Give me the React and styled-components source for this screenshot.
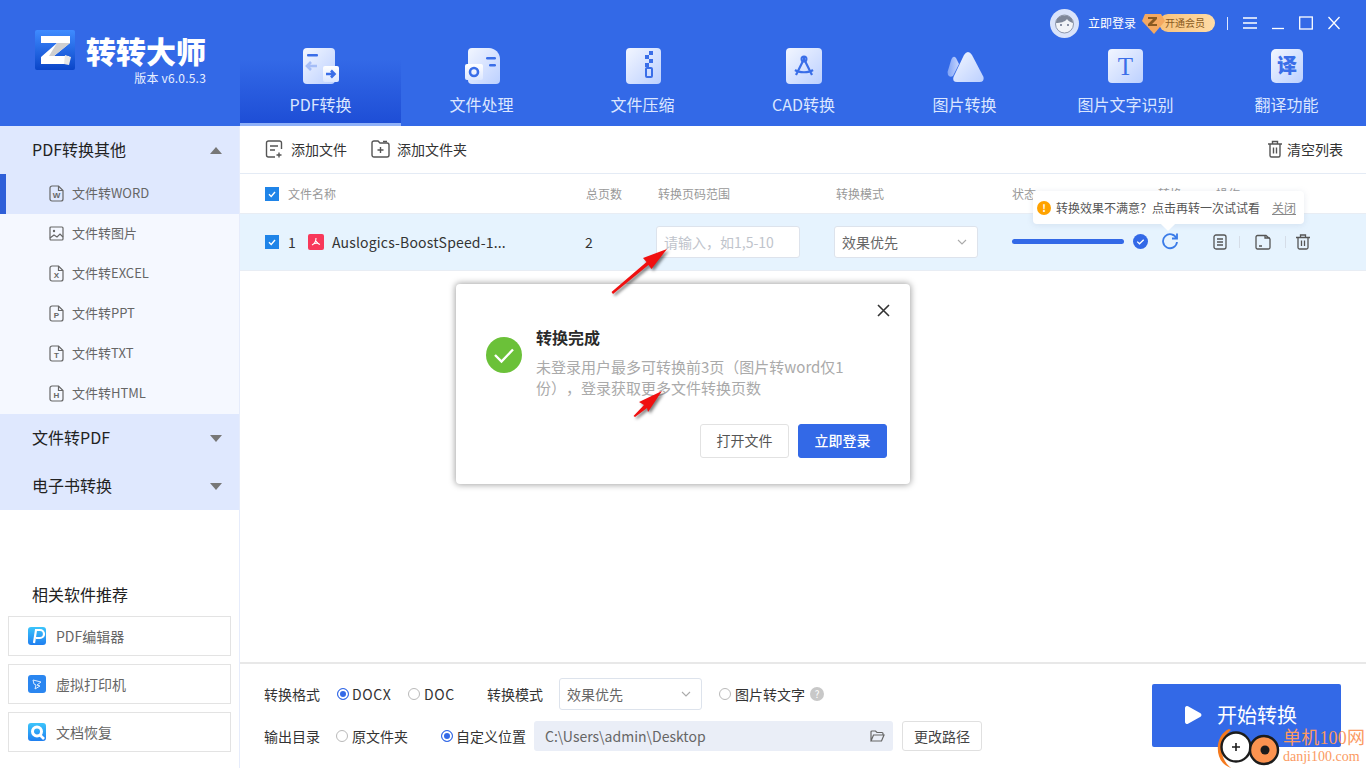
import React from "react";
import styled, { createGlobalStyle } from "styled-components";

const Global = createGlobalStyle`
  html, body { margin: 0; padding: 0; background: #fff; }
  * { box-sizing: border-box; }
  body { font-family: "Noto Sans CJK SC", "Noto Sans", sans-serif; overflow: hidden; text-spacing-trim: space-all; }
`;

const Page = styled.div`
  position: relative; width: 1366px; height: 768px; overflow: hidden;
  display: flex; flex-direction: column; color: #333; line-height: 20px;
`;
const Header = styled.header`display: flex; height: 126px; background: #3369e7; flex: none;`;
const Brand = styled.div`
  width: 240px; flex: none; display: grid; grid-template-columns: 40px auto; column-gap: 11px;
  padding: 30px 0 0 35px; align-content: start; color: #fff;
`;
const BrandText = styled.div`display: flex; flex-direction: column; align-items: flex-end; width: 120px; margin-top: 4px;`;
const BrandName = styled.div`font-size: 30px; line-height: 32px; font-weight: 900; letter-spacing: 0; white-space: nowrap;`;
const Version = styled.div`font-size: 12px; line-height: 16px; margin-top: 4px; color: #e8efff; white-space: nowrap; letter-spacing: .2px;`;
const HeaderRight = styled.div`flex: 1; display: flex; flex-direction: column; min-width: 0;`;
const TopBar = styled.div`height: 48px; display: flex; align-items: flex-start; justify-content: flex-end; padding: 9px 25px 0 0;`;
const Avatar = styled.div`width: 29px; height: 29px; flex: none;`;
const LoginLink = styled.span`font-size: 12px; color: #fff; margin-left: 9px; line-height: 28px; width: 53px; white-space: nowrap;`;
const Vip = styled.div`position: relative; margin-top: 5px; width: 74px; height: 18px;`;
const VipPill = styled.div`
  position: absolute; left: 18px; top: 0; width: 56px; height: 18px; border-radius: 9px;
  background: linear-gradient(90deg, #f9c27c, #ffdca6); color: #8a5a22; font-size: 10px; line-height: 18px;
  padding-left: 6px; white-space: nowrap;
`;
const VipMark = styled.svg`position: absolute; left: 0; top: -2px; width: 24px; height: 22px;`;
const Divider = styled.div`width: 1px; height: 13px; background: #dfe8ff; margin: 8px 15px 0 12px;`;
const WinBtn = styled.svg`width: 14px; height: 14px; margin: 7px ${p => p.$gap}px 0 0; flex: none; stroke: #fff; fill: none; stroke-width: 1.3;`;
const Tabs = styled.nav`display: grid; grid-template-columns: repeat(7, 161px); height: 78px;`;
const Tab = styled.div`
  display: flex; flex-direction: column; align-items: center; height: 78px; position: relative;
  background: ${p => p.$active ? "linear-gradient(180deg, #3369e7 15%, #1e4ed6 100%)" : "transparent"};
  border-bottom: 3px solid ${p => p.$active ? "#8fb1f8" : "transparent"};
`;
const TabIcon = styled.svg`width: 40px; height: 38px; flex: none;`;
const TabLabel = styled.span`font-size: 16px; line-height: 22px; margin-top: 7px; color: #dbe6ff; white-space: nowrap;`;

const Body = styled.div`flex: 1; display: flex; min-height: 0;`;
const Side = styled.aside`width: 240px; flex: none; display: flex; flex-direction: column; border-right: 1px solid #e6ecfb; background: #fff;`;
const GroupHead = styled.div`
  height: 48px; display: flex; align-items: center; justify-content: space-between; padding: 0 17px 2px 32px;
  background: #dfe8fe; font-size: 16px; color: #222;
`;
const Caret = styled.span`
  width: 0; height: 0; border-left: 6px solid transparent; border-right: 6px solid transparent; margin-top: 2px;
  ${p => p.$up ? "border-bottom: 7px solid #777;" : "border-top: 7px solid #777;"}
`;
const SubList = styled.div`background: #f5f8ff; display: flex; flex-direction: column;`;
const SubItem = styled.div`
  height: 40px; display: flex; align-items: center; gap: 8px; font-size: 13px; color: #666; position: relative; padding-bottom: 1px;
  background: ${p => p.$active ? "#dfe8fe" : "transparent"};
  border-left: ${p => p.$active ? "6px solid #2f5fd8" : "0"};
  padding-left: ${p => p.$active ? "43px" : "49px"};
`;
const SubLabel = styled.span`margin-top: -2px; white-space: nowrap;`;
const SubIcon = styled.svg`width: 15px; height: 17px; flex: none; fill: none; stroke: #666; stroke-width: 1.2;`;
const RecBlock = styled.div`margin-top: auto; padding: 0 8px 16px 8px; display: flex; flex-direction: column;`;
const RecTitle = styled.div`font-size: 16px; line-height: 22px; color: #222; padding-left: 24px; margin-bottom: 11px; margin-top: -1px;`;
const RecBtn = styled.div`
  width: 223px; height: 40px; border: 1px solid #e3e3e3; display: flex; align-items: center; gap: 10px; padding-left: 19px; 
  font-size: 14px; color: #666; margin-bottom: 8px; &:last-child { margin-bottom: 0; }
`;
const RecIcon = styled.svg`width: 18px; height: 18px; flex: none;`;

const Main = styled.main`flex: 1; display: flex; flex-direction: column; min-width: 0;`;
const Toolbar = styled.div`height: 48px; flex: none; display: flex; align-items: center; padding: 0 23px 2px 25px; border-bottom: 1px solid #e4ebf5; gap: 24px; font-size: 14px; color: #333;`;
const ToolBtn = styled.div`display: flex; align-items: center; gap: ${p => p.$gap || 8}px; white-space: nowrap; ${p => p.$right && "margin-left: auto;"}`;
const ToolIcon = styled.svg`width: ${p => p.$w || 18}px; height: 18px; fill: none; stroke: #555; stroke-width: 1.4; flex: none;`;
const TableGrid = `display: grid; grid-template-columns: 321px 72px 178px 176px 146px 58px 1fr; padding-left: 25px; align-items: center;`;
const HeadRow = styled.div`${TableGrid} height: 40px; flex: none; font-size: 12px; color: #999; border-bottom: 1px solid #e8edf4;`;
const Row = styled.div`${TableGrid} height: 57px; flex: none; background: #e6f3fe; border-bottom: 1px solid #e8edf4; font-size: 14px; color: #333;`;
const NameCell = styled.div`display: flex; align-items: center; min-width: 0;`;
const Check = styled.span`
  width: 14px; height: 14px; background: #1f84e8; flex: none; margin-right: ${p => p.$gap}px;
  display: flex; align-items: center; justify-content: center; svg { width: 10px; height: 10px; }
`;
const RowNo = styled.span`width: 20px; flex: none;`;
const FileName = styled.span`margin-left: 8px; white-space: nowrap; width: 180px; color: #333; letter-spacing: .17px;`;
const PageCount = styled.span`margin-left: -1px;`;
const RangeInput = styled.div`
  width: 144px; height: 32px; margin-left: -2px; background: #fff; border: 1px solid #dde3ec; border-radius: 3px;
  display: flex; align-items: center; padding-left: 7px; font-size: 14px; color: #c0c4cc; white-space: nowrap;
`;
const Select = styled.div`
  width: ${p => p.$w}px; height: ${p => p.$h}px; margin-left: ${p => p.$ml || 0}px; background: #fff; border: 1px solid #dde3ec; border-radius: 3px;
  display: flex; align-items: center; justify-content: space-between; padding: 0 10px 0 7px; font-size: 14px; color: #666; flex: none;
  svg { width: 10px; height: 6px; stroke: #aaa; fill: none; stroke-width: 1.1; }
`;
const StatusCell = styled.div`display: flex; align-items: center; gap: 9px; margin-top: -2px;`;
const Progress = styled.div`width: 112px; height: 5px; border-radius: 3px; background: #3369e7;`;
const DoneDot = styled.svg`width: 15px; height: 15px; flex: none;`;
const RetryCell = styled.div`display: flex; margin-left: 3px; margin-top: -2px;`;
const OpsCell = styled.div`display: flex; align-items: center; margin-left: -4px;`;
const OpIcon = styled.svg`width: 16px; height: 16px; fill: none; stroke: #555; stroke-width: 1.3; flex: none;`;
const OpSep = styled.span`width: 1px; height: 12px; background: #d5dde8; margin: 0 ${p => p.$r}px 0 ${p => p.$l}px;`;
const ListSpace = styled.div`flex: 1;`;
const Footer = styled.footer`height: 106px; flex: none; border-top: 2px solid #e8e8e8; display: flex; padding: 14px 25px 0 24px; font-size: 14px; color: #333;`;
const FootLeft = styled.div`display: flex; flex-direction: column; gap: 11px;`;
const FootRow = styled.div`display: flex; align-items: center; height: ${p => p.$h}px;`;
const FootLabel = styled.span`width: 56px; flex: none; margin-right: ${p => p.$mr}px; white-space: nowrap;`;
const Option = styled.label`display: flex; align-items: center; gap: ${p => p.$gap ?? 4}px; width: ${p => p.$w ? p.$w + "px" : "auto"}; flex: none; white-space: nowrap; margin-left: ${p => p.$ml || 0}px;`;
const LatinOpt = styled.span`letter-spacing: .6px;`;
const Radio = styled.span`
  width: 12px; height: 12px; border-radius: 50%; flex: none; background: #fff;
  border: 1px solid ${p => p.$on ? "#3369e7" : "#b9b9b9"};
  ${p => p.$on && "box-shadow: inset 0 0 0 2px #fff; background: #3369e7;"}
`;
const Help = styled.span`
  width: 14px; height: 14px; border-radius: 50%; background: #c8c8c8; color: #fff; font-size: 10px; line-height: 14px;
  text-align: center; margin-left: 5px; flex: none;
`;
const PathBox = styled.div`
  width: 359px; height: 30px; background: #eaeef7; border-radius: 3px; display: flex; align-items: center; justify-content: space-between;
  padding: 0 8px 0 11px; color: #666; margin-left: 8px; flex: none;
  svg { width: 15px; height: 14px; stroke: #666; fill: none; stroke-width: 1.2; }
`;
const PathBtn = styled.div`
  width: 80px; height: 30px; border: 1px solid #e0e0e0; border-radius: 3px; margin-left: 9px; display: flex; align-items: center; justify-content: center; color: #444; flex: none;
`;
const StartBtn = styled.div`
  margin: 6px 0 0 auto; width: 189px; height: 63px; background: #3369e7; border-radius: 2px; color: #fff; font-size: 20px;
  display: flex; align-items: center; gap: 15px; flex: none; padding: 0 0 2px 32px;
  svg { width: 18px; height: 20px; fill: #fff; }
`;

const Tooltip = styled.div`
  position: absolute; left: 1033px; top: 191px; width: 271px; height: 33px; background: #fff; border-radius: 4px;
  box-shadow: 0 1px 6px rgba(120,140,170,.18); display: flex; align-items: center; padding: 0 8px 0 4px; font-size: 12px; color: #555; white-space: nowrap;
  &::after { content: ""; position: absolute; left: 130px; bottom: -5px; width: 10px; height: 10px; background: #fff; transform: rotate(45deg); }
`;
const WarnDot = styled.span`
  width: 14px; height: 14px; border-radius: 50%; background: #ffa200; color: #fff; font-size: 10px; font-weight: 700; line-height: 14px; text-align: center; margin-right: 5px; flex: none;
`;
const TipClose = styled.span`margin-left: auto; text-decoration: underline; color: #888;`;

const Dialog = styled.div`
  position: absolute; left: 456px; top: 284px; width: 454px; height: 200px; background: #fff; border-radius: 4px;
  box-shadow: 0 0 6px 1px rgba(0,0,0,.35); padding: 43px 23px 26px 30px; display: flex; flex-direction: column;
`;
const CloseX = styled.svg`position: absolute; right: 20px; top: 20px; width: 13px; height: 13px; stroke: #333; stroke-width: 1.6; fill: none;`;
const DlgBody = styled.div`display: flex; gap: 14px;`;
const DlgOk = styled.svg`width: 36px; height: 36px; flex: none; margin-top: 10px;`;
const DlgText = styled.div`width: 318px; margin-top: -1px;`;
const DlgTitle = styled.div`font-size: 16px; font-weight: 700; line-height: 22px; color: #2b2b2b;`;
const DlgMsg = styled.div`font-size: 15px; line-height: 21px; color: #aaa; margin-top: 8px;`;
const DlgActions = styled.div`margin-top: auto; display: flex; justify-content: flex-end; gap: 9px;`;
const DlgBtn = styled.div`
  width: 89px; height: 34px; border-radius: 3px; display: flex; align-items: center; justify-content: center; font-size: 14px; padding-bottom: 2px;
  background: ${p => p.$primary ? "#3369e7" : "#fff"}; color: ${p => p.$primary ? "#fff" : "#555"};
  border: 1px solid ${p => p.$primary ? "#3369e7" : "#e2e2e2"}; font-weight: ${p => p.$primary ? 500 : 400};
`;
const Arrow = styled.svg`
  position: absolute; left: ${p => p.$x}px; top: ${p => p.$y}px; width: ${p => p.$w}px; height: ${p => p.$h}px; overflow: visible;
  filter: drop-shadow(2px 2px 1.5px rgba(0,0,0,.5));
`;
const Watermark = styled.div`position: absolute; left: 1215px; top: 725px; width: 151px; height: 43px;`;
const WmIcon = styled.svg`position: absolute; left: 0; top: 0; width: 72px; height: 43px;`;
const WmTitle = styled.div`position: absolute; left: 68px; top: 3px; font-family: "Liberation Serif", "Noto Sans CJK SC", serif; font-size: 18px; line-height: 20px; color: #fb9a62; white-space: nowrap; letter-spacing: .2px;`;
const WmUrl = styled.div`position: absolute; left: 68px; top: 24px; font-family: "Liberation Serif", serif; font-size: 14px; line-height: 16px; color: #fb9a62; white-space: nowrap;`;

const Defs = () => (
  <svg width="0" height="0" style={{ position: "absolute" }}>
    <defs>
      <linearGradient id="tabG" x1="0" y1="0" x2="1" y2="1">
        <stop offset="0" stopColor="#f2f6ff" />
        <stop offset="1" stopColor="#bcd0ff" />
      </linearGradient>
      <linearGradient id="tabG2" x1="0" y1="0" x2="0" y2="1">
        <stop offset="0" stopColor="#ffffff" />
        <stop offset="1" stopColor="#dbe6ff" />
      </linearGradient>
      <linearGradient id="tabG3" x1="0" y1="0" x2="1" y2="0">
        <stop offset="0" stopColor="#7fa2f5" />
        <stop offset="1" stopColor="#c6d6ff" />
      </linearGradient>
      <linearGradient id="logoG" x1="0" y1="0" x2="0" y2="1">
        <stop offset="0" stopColor="#3f8bff" />
        <stop offset="1" stopColor="#0a45c8" />
      </linearGradient>
      <linearGradient id="recG" x1="0" y1="0" x2="0" y2="1">
        <stop offset="0" stopColor="#3cc5fb" />
        <stop offset="1" stopColor="#1f7ff0" />
      </linearGradient>
    </defs>
  </svg>
);

const tabIcons = [
  <g key="a">
    <rect x="2" y="0" width="32" height="36" rx="4" fill="url(#tabG)" />
    <rect x="6" y="6" width="11" height="2.5" rx="1" fill="#3a6ee8" />
    <path d="M6 18h10M10 14l-4 4 4 4" stroke="#a5bdf7" strokeWidth="2.6" fill="none" />
    <rect x="22" y="18" width="16" height="16" rx="2" fill="url(#tabG2)" />
    <path d="M25 26h8M30 22.5l3.5 3.5-3.5 3.5" stroke="#3a6ee8" strokeWidth="2.6" fill="none" />
  </g>,
  <g key="b">
    <path d="M6 4a4 4 0 0 1 4-4h17c6 0 11 5 11 11v21a4 4 0 0 1-4 4H10a4 4 0 0 1-4-4z" fill="url(#tabG)" />
    <rect x="24" y="9" width="10" height="2.5" rx="1.2" fill="#3a6ee8" />
    <rect x="27" y="16" width="7" height="2.5" rx="1.2" fill="#3a6ee8" />
    <rect x="3" y="16" width="18" height="16" rx="2" fill="url(#tabG2)" />
    <circle cx="12" cy="24" r="4" fill="none" stroke="#3a6ee8" strokeWidth="2.6" />
  </g>,
  <g key="c">
    <rect x="3" y="0" width="35" height="36" rx="4" fill="url(#tabG)" />
    <path d="M26 3h4v4h-4zM22 7h4v4h-4zM26 11h4v4h-4zM22 15h4v4h-4z" fill="#3a6ee8" />
    <rect x="23" y="20" width="6" height="9" rx="1" fill="none" stroke="#3a6ee8" strokeWidth="2" />
  </g>,
  <g key="d">
    <rect x="2" y="0" width="36" height="36" rx="4" fill="url(#tabG)" />
    <path d="M20 8v3M20 11l-8 16M20 11l8 16M11 22c4 3 14 3 18 0" stroke="#3a6ee8" strokeWidth="2.2" fill="none" />
    <circle cx="20" cy="11" r="2.5" fill="none" stroke="#3a6ee8" strokeWidth="2" />
  </g>,
  <g key="e">
    <path d="M2.5 24L6.5 11q2-4 4.5-1L14 16 8 28q-3 2-5-1z" fill="url(#tabG3)" />
    <path d="M8.5 29L19 7q4-6 8 0L38.5 29q1 5-4 5H12q-5 0-3.5-5z" fill="url(#tabG)" />
  </g>,
  <g key="f">
    <rect x="2" y="1" width="35" height="34" rx="4" fill="url(#tabG)" />
    <text x="19.5" y="26.5" textAnchor="middle" fontFamily="Liberation Serif, serif" fontSize="25" fontWeight="400" fill="#3a6ee8">T</text>
  </g>,
  <g key="g">
    <rect x="4" y="1" width="32" height="34" rx="5" fill="url(#tabG)" />
    <text x="20" y="25" textAnchor="middle" fontFamily="Noto Sans CJK SC, sans-serif" fontSize="20" fontWeight="900" fill="#3a6ee8">译</text>
  </g>,
];
const tabNames = ["PDF转换", "文件处理", "文件压缩", "CAD转换", "图片转换", "图片文字识别", "翻译功能"];

const FileGlyph = ({ ch }) => (
  <SubIcon viewBox="0 0 15 17">
    <path d="M3 1h6.5L14 5.5V14a2 2 0 0 1-2 2H3a2 2 0 0 1-2-2V3a2 2 0 0 1 2-2z" />
    <path d="M9.5 1v4.5H14" />
    <text x="7.5" y="13" textAnchor="middle" fontFamily="Liberation Sans, sans-serif" fontSize="8" fontWeight="700" fill="#666" stroke="none">{ch}</text>
  </SubIcon>
);
const ImgGlyph = () => (
  <SubIcon viewBox="0 0 15 17">
    <rect x="1" y="2" width="13" height="13" rx="1" />
    <circle cx="5" cy="6" r="1.2" fill="#666" stroke="none" />
    <path d="M1 13l4-3 3 2 3-3 3 3" />
  </SubIcon>
);
const subs = [
  ["文件转WORD", "W"], ["文件转图片", null], ["文件转EXCEL", "X"], ["文件转PPT", "P"], ["文件转TXT", "T"], ["文件转HTML", "H"],
];
const Tick = () => (
  <svg viewBox="0 0 10 10"><path d="M2 5.2l2.2 2.2L8 3" stroke="#fff" strokeWidth="1.4" fill="none" /></svg>
);
const RedArrow = ({ x, y, w, h, d }) => (
  <Arrow $x={x} $y={y} $w={w} $h={h} viewBox={`0 0 ${w} ${h}`}>
    <path d={d} fill="#f01010" />
  </Arrow>
);

export default function App() {
  return (
    <Page>
      <Global />
      <Defs />
      <Header>
        <Brand>
          <svg width="40" height="40" viewBox="0 0 40 40">
            <rect width="40" height="40" rx="2" fill="url(#logoG)" />
            <path d="M6 6h29v7L19 26h15v8H6v-7l16-14H6z" fill="#fff" />
            <path d="M22 13h13L19 26h-5z" fill="#cfcfcf" />
            <path d="M30 25l6 2-2 8-5-1z" fill="#e6e6e6" />
          </svg>
          <BrandText>
            <BrandName>转转大师</BrandName>
            <Version>版本 v6.0.5.3</Version>
          </BrandText>
        </Brand>
        <HeaderRight>
          <TopBar>
            <Avatar>
              <svg width="29" height="29" viewBox="0 0 29 29">
                <circle cx="14.5" cy="14.5" r="14.5" fill="#d9e3fa" />
                <circle cx="14.5" cy="15" r="9" fill="#f2f4f8" stroke="#8d97ab" />
                <path d="M6 14c0-10 17-10 17 0-4-1-5-3-6-4-2 3-7 4-11 4z" fill="#7e8799" />
                <circle cx="11" cy="16" r="1" fill="#66708a" />
                <circle cx="18" cy="16" r="1" fill="#66708a" />
              </svg>
            </Avatar>
            <LoginLink>立即登录</LoginLink>
            <Vip>
              <VipPill>开通会员</VipPill>
              <VipMark viewBox="0 0 24 22">
                <path d="M4 2h16l4 7-11 13L1 9z" fill="#f4a860" />
                <path d="M7 5h9v2l-5 5h5v2H7v-2l5-5H7z" fill="#8a5a22" />
              </VipMark>
            </Vip>
            <Divider />
            <WinBtn $gap={14} viewBox="0 0 14 14"><path d="M0 2h14M0 7h14M0 12h14" /></WinBtn>
            <WinBtn $gap={14} viewBox="0 0 14 14"><path d="M1 12.5h12" /></WinBtn>
            <WinBtn $gap={14} viewBox="0 0 14 14"><rect x=".7" y="1" width="12.6" height="12" /></WinBtn>
            <WinBtn $gap={0} viewBox="0 0 14 14"><path d="M1.5 1l11 12M12.5 1l-11 12" /></WinBtn>
          </TopBar>
          <Tabs>
            {tabNames.map((n, i) => (
              <Tab key={n} $active={i === 0}>
                <TabIcon viewBox="0 0 40 38">{tabIcons[i]}</TabIcon>
                <TabLabel>{n}</TabLabel>
              </Tab>
            ))}
          </Tabs>
        </HeaderRight>
      </Header>
      <Body>
        <Side>
          <GroupHead>PDF转换其他<Caret $up /></GroupHead>
          <SubList>
            {subs.map(([t, c], i) => (
              <SubItem key={t} $active={i === 0}>
                {c ? <FileGlyph ch={c} /> : <ImgGlyph />}
                <SubLabel>{t}</SubLabel>
              </SubItem>
            ))}
          </SubList>
          <GroupHead>文件转PDF<Caret /></GroupHead>
          <GroupHead>电子书转换<Caret /></GroupHead>
          <RecBlock>
            <RecTitle>相关软件推荐</RecTitle>
            <RecBtn>
              <RecIcon viewBox="0 0 18 18">
                <rect width="18" height="18" rx="3" fill="url(#recG)" />
                <path d="M6 16L8 3h4a3.5 3.5 0 0 1 0 8H8" stroke="#fff" strokeWidth="2.2" fill="none" />
              </RecIcon>
              PDF编辑器
            </RecBtn>
            <RecBtn>
              <RecIcon viewBox="0 0 18 18">
                <rect width="18" height="18" rx="3" fill="#2a86f0" />
                <path d="M5 5l8 2-4 3 3 1-5 3 1-4-2-1z" stroke="#dcecff" strokeWidth="1" fill="none" />
              </RecIcon>
              虚拟打印机
            </RecBtn>
            <RecBtn>
              <RecIcon viewBox="0 0 18 18">
                <rect width="18" height="18" rx="3" fill="url(#recG)" />
                <circle cx="9" cy="8.5" r="4.5" stroke="#fff" strokeWidth="3" fill="none" />
                <path d="M12 12l4 4" stroke="#fff" strokeWidth="2.6" />
              </RecIcon>
              文档恢复
            </RecBtn>
          </RecBlock>
        </Side>
        <Main>
          <Toolbar>
            <ToolBtn $gap={8}>
              <ToolIcon viewBox="0 0 18 18">
                <path d="M16.5 9V3a2 2 0 0 0-2-2h-11a2 2 0 0 0-2 2v12a2 2 0 0 0 2 2H10" />
                <path d="M5 6h8M5 10h5M14 12.5v5M11.5 15h5" />
              </ToolIcon>
              添加文件
            </ToolBtn>
            <ToolBtn $gap={7}>
              <ToolIcon $w={19} viewBox="0 0 19 18">
                <path d="M1 3a2 2 0 0 1 2-2h4l2 2h7a2 2 0 0 1 2 2v10a2 2 0 0 1-2 2H3a2 2 0 0 1-2-2z" />
                <path d="M9.5 7v6M6.5 10h6M12 1.5h4" />
              </ToolIcon>
              添加文件夹
            </ToolBtn>
            <ToolBtn $right $gap={5}>
              <ToolIcon $w={14} viewBox="0 0 14 18">
                <path d="M0 4h14M4.5 4V1.5h5V4M2 4v11.5a1.5 1.5 0 0 0 1.5 1.5h7a1.5 1.5 0 0 0 1.5-1.5V4M5.5 7.5v6M8.5 7.5v6" />
              </ToolIcon>
              清空列表
            </ToolBtn>
          </Toolbar>
          <HeadRow>
            <NameCell><Check $gap={9}><Tick /></Check>文件名称</NameCell>
            <span>总页数</span>
            <span>转换页码范围</span>
            <span>转换模式</span>
            <span>状态</span>
            <span>转换</span>
            <span>操作</span>
          </HeadRow>
          <Row>
            <NameCell>
              <Check $gap={9}><Tick /></Check>
              <RowNo>1</RowNo>
              <svg width="16" height="16" viewBox="0 0 16 16" style={{ flex: "none" }}>
                <rect width="16" height="16" rx="2" fill="#f8385a" />
                <path d="M8 4c0 3-2 6-4 7M8 7c1 2 2 3 4 3.5M5 10c2-1 4-1 6-.5" stroke="#fff" strokeWidth="1.1" fill="none" />
              </svg>
              <FileName>Auslogics-BoostSpeed-1...</FileName>
            </NameCell>
            <PageCount>2</PageCount>
            <RangeInput>请输入，如1,5-10</RangeInput>
            <Select $w={144} $h={32} $ml={-2}>
              效果优先
              <svg viewBox="0 0 10 6"><path d="M1 1l4 4 4-4" /></svg>
            </Select>
            <StatusCell>
              <Progress />
              <DoneDot viewBox="0 0 15 15">
                <circle cx="7.5" cy="7.5" r="7.5" fill="#3369e7" />
                <path d="M4.2 7.6l2.3 2.2 4.2-4" stroke="#fff" strokeWidth="1.3" fill="none" />
              </DoneDot>
            </StatusCell>
            <RetryCell>
              <svg width="18" height="18" viewBox="0 0 18 18" fill="none" stroke="#3a7be8" strokeWidth="1.8">
                <path d="M15.5 6.5A7 7 0 1 0 16 10" />
                <path d="M16 1.5v5h-5" />
              </svg>
            </RetryCell>
            <OpsCell>
              <OpIcon viewBox="0 0 16 16"><rect x="2" y="1" width="12" height="14" rx="2" /><path d="M5 5h6M5 8h6M5 11h6" /></OpIcon>
              <OpSep $l={11} $r={15} />
              <OpIcon viewBox="0 0 16 16"><path d="M1 3a1.5 1.5 0 0 1 1.5-1.5H11L15 5v8.5a1.5 1.5 0 0 1-1.5 1.5h-11A1.5 1.5 0 0 1 1 13.5zM10 1.5V4h5M4 12h3" /></OpIcon>
              <OpSep $l={14} $r={9} />
              <OpIcon viewBox="0 0 16 16"><path d="M1 3.5h14M5.5 3.5V1h5v2.5M3 3.5v10a1.5 1.5 0 0 0 1.5 1.5h7a1.5 1.5 0 0 0 1.5-1.5v-10M6.5 6.5v5.5M9.5 6.5v5.5" /></OpIcon>
            </OpsCell>
          </Row>
          <ListSpace />
          <Footer>
            <FootLeft>
              <FootRow $h={32}>
                <FootLabel $mr={17}>转换格式</FootLabel>
                <Option $w={71} $gap={3}><Radio $on /><LatinOpt>DOCX</LatinOpt></Option>
                <Option $w={79}><Radio /><LatinOpt>DOC</LatinOpt></Option>
                <FootLabel $mr={16}>转换模式</FootLabel>
                <Select $w={143} $h={32}>
                  效果优先
                  <svg viewBox="0 0 10 6"><path d="M1 1l4 4 4-4" /></svg>
                </Select>
                <Option $ml={17}><Radio />图片转文字</Option>
                <Help>?</Help>
              </FootRow>
              <FootRow $h={30}>
                <FootLabel $mr={16}>输出目录</FootLabel>
                <Option $w={105}><Radio />原文件夹</Option>
                <Option $w={85} $gap={3}><Radio $on />自定义位置</Option>
                <PathBox>
                  C:\Users\admin\Desktop
                  <svg viewBox="0 0 15 14"><path d="M1 12V3a1 1 0 0 1 1-1h3.5l1.5 1.5h5a1 1 0 0 1 1 1V6M1 12l2.5-6H14l-2.5 6z" /></svg>
                </PathBox>
                <PathBtn>更改路径</PathBtn>
              </FootRow>
            </FootLeft>
            <StartBtn>
              <svg viewBox="0 0 18 20"><path d="M1 3a2 2 0 0 1 3-1.7l12.5 7a2 2 0 0 1 0 3.4l-12.5 7A2 2 0 0 1 1 17z" /></svg>
              开始转换
            </StartBtn>
          </Footer>
        </Main>
      </Body>

      <Tooltip>
        <WarnDot>!</WarnDot>
        转换效果不满意？点击再转一次试试看
        <TipClose>关闭</TipClose>
      </Tooltip>

      <Dialog>
        <CloseX viewBox="0 0 13 13"><path d="M1 1l11 11M12 1L1 12" /></CloseX>
        <DlgBody>
          <DlgOk viewBox="0 0 36 36">
            <circle cx="18" cy="18" r="18" fill="#6bc139" />
            <path d="M9 18l6.5 6.5L27 12.5" stroke="#fff" strokeWidth="2.4" fill="none" />
          </DlgOk>
          <DlgText>
            <DlgTitle>转换完成</DlgTitle>
            <DlgMsg>未登录用户最多可转换前3页（图片转word仅1份），登录获取更多文件转换页数</DlgMsg>
          </DlgText>
        </DlgBody>
        <DlgActions>
          <DlgBtn>打开文件</DlgBtn>
          <DlgBtn $primary>立即登录</DlgBtn>
        </DlgActions>
      </Dialog>

      <RedArrow x={610} y={248} w={60} h={48} d="M57 1L33 10l3.5 4L1.5 44l1.5 2L38.5 17l3 4z" />
      <RedArrow x={632} y={390} w={32} h={30} d="M30 1L7 12l5 3-10.5 11 1.5 1L15 18l1 4z" />

      <Watermark>
        <WmIcon viewBox="0 0 72 43">
          <path d="M14 4C2 9-1 28 8 38c3 3 6 4 8 5-5-4-10-11-9-20 1-8 4-14 9-18z" fill="#f47a1f" />
          <circle cx="21" cy="22" r="14.5" fill="#fff" stroke="#1c1c1c" strokeWidth="2.4" />
          <path d="M21 18v8M17 22h8" stroke="#1c1c1c" strokeWidth="1.6" />
          <circle cx="49" cy="25" r="14" fill="#fc9350" stroke="#1c1c1c" strokeWidth="2.4" />
          <circle cx="50" cy="25" r="4.5" fill="#1c1c1c" />
        </WmIcon>
        <WmTitle>单机100网</WmTitle>
        <WmUrl>danji100.com</WmUrl>
      </Watermark>
    </Page>
  );
}
